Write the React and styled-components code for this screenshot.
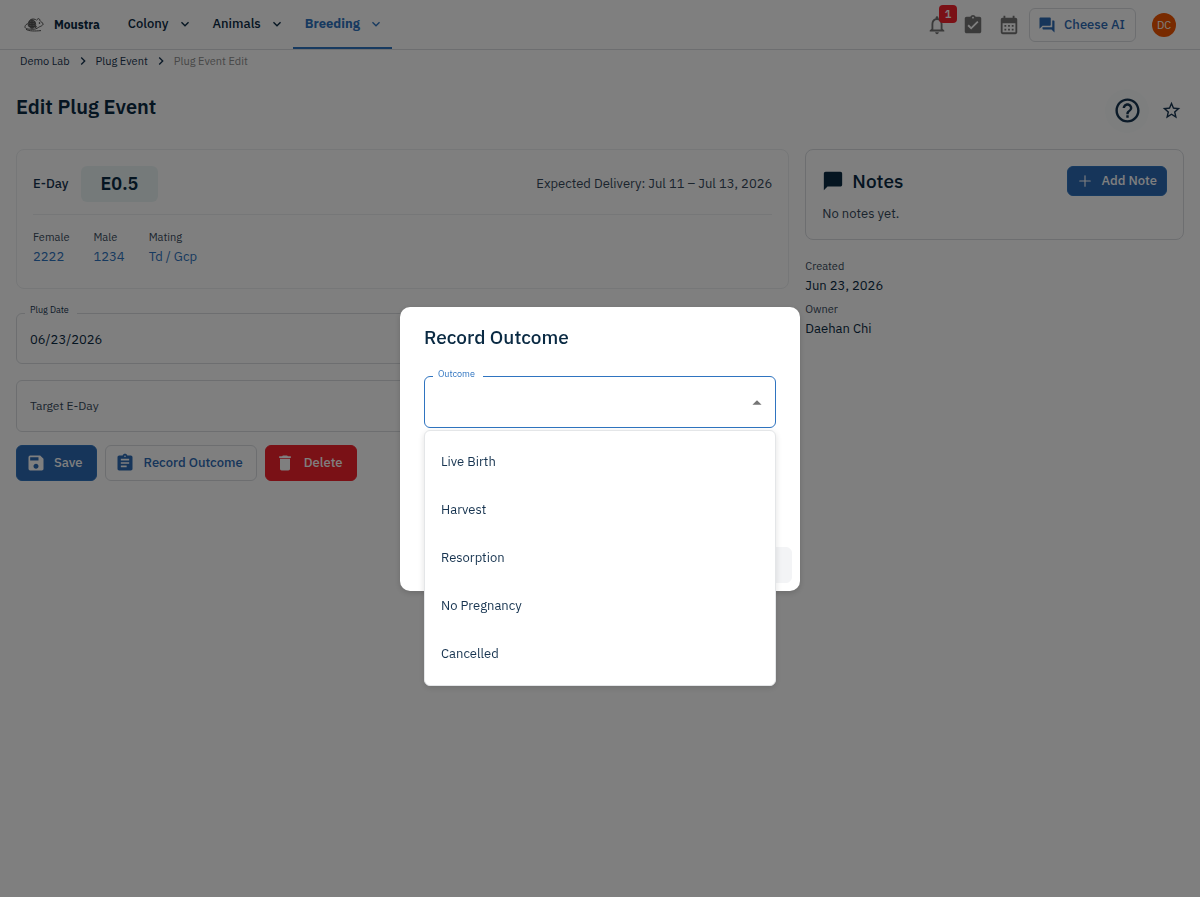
import React from 'react'
import styled, {createGlobalStyle, ThemeProvider} from 'styled-components'
import {Plus} from 'lucide-react'
import {
  MdArrowDropUp,
  MdAssignment,
  MdAssignmentTurnedIn,
  MdCalendarMonth,
  MdChatBubble,
  MdChevronRight,
  MdDelete,
  MdExpandMore,
  MdForum,
  MdHelpOutline,
  MdNotificationsNone,
  MdSave,
  MdStarBorder
} from 'react-icons/md'

const theme = {
  colors: {
    primary: '#2f74c0',
    primary_dark: '#2c6ab4',
    error: '#f5222d',
    navy: '#0a2a43',
    text: '#173450',
    muted: '#36495b',
    disabled: '#8f8f8f',
    icon: '#757575',
    border: '#dadde1',
    border_light: '#eceef0',
    white: '#ffffff'
  }
}

const GlobalStyle = createGlobalStyle`
  * {
    box-sizing: border-box;
  }

  body {
    margin: 0;
    background: #ffffff;
    font-family: 'IBM Plex Sans', 'Noto Sans', sans-serif;
    font-size: 13px;
    line-height: 20px;
    color: ${theme.colors.navy};
  }

  button, input, select {
    font: inherit;
  }

  h1, h2, p, ul, ol, dl, dd {
    margin: 0;
    padding: 0;
  }
`

const Page = styled.div`
  min-height: 100vh;
`

const Header = styled.header`
  display: flex;
  align-items: center;
  justify-content: space-between;
  height: 50px;
  padding: 0 24px;
  border-bottom: 1px solid ${props => props.theme.colors.border};
`

const HeaderGroup = styled.div`
  display: flex;
  align-items: stretch;
  height: 100%;
`

const Brand = styled.a`
  display: flex;
  align-items: center;
  gap: 10px;
  margin-right: 16px;
  color: ${props => props.theme.colors.navy};
  font-size: 12px;
  font-weight: 700;
  text-decoration: none;
`

const Nav = styled.nav`
  display: flex;
`

const NavButton = styled.button`
  display: flex;
  align-items: center;
  gap: 8px;
  padding: 0 8px 0 12px;
  border: 0;
  border-bottom: 2px solid ${props => props.$active ? props.theme.colors.primary : 'transparent'};
  background: none;
  color: ${props => props.$active ? props.theme.colors.primary : props.theme.colors.navy};
  font-weight: ${props => props.$active ? 700 : 500};
`

const Tools = styled.div`
  display: flex;
  align-items: center;
`

const ToolButton = styled.button`
  position: relative;
  display: flex;
  align-items: center;
  justify-content: center;
  width: 36px;
  height: 36px;
  padding: 0;
  border: 0;
  background: none;
  color: ${props => props.theme.colors.icon};
`

const Badge = styled.span`
  position: absolute;
  top: -2px;
  right: -2px;
  width: 18px;
  height: 18px;
  border-radius: 4px;
  background: ${props => props.theme.colors.error};
  color: ${props => props.theme.colors.white};
  font-size: 11px;
  font-weight: 600;
  line-height: 18px;
`

const Avatar = styled.button`
  width: 24px;
  height: 24px;
  margin-left: 16px;
  padding: 0;
  border: 0;
  border-radius: 50%;
  background: #f05400;
  color: ${props => props.theme.colors.white};
  font-size: 11px;
`

const variants = {
  contained: props => `
    background: ${props.theme.colors.primary_dark};
    border-color: ${props.theme.colors.primary};
    color: ${props.theme.colors.white};
  `,
  outlined: props => `
    gap: 9px;
    background: none;
    border-color: ${props.theme.colors.border};
    color: ${props.theme.colors.primary_dark};
  `,
  danger: props => `
    gap: 9px;
    background: ${props.theme.colors.error};
    border-color: ${props.theme.colors.error};
    color: ${props.theme.colors.white};
  `,
  disabled: () => `
    background: #f3f4f6;
    border-color: #f3f4f6;
    color: #8c959f;
  `
}

const Button = styled.button`
  display: flex;
  align-items: center;
  gap: ${props => props.$small ? 7 : 8}px;
  height: ${props => props.$small ? 30 : 36}px;
  padding: 0 ${props => props.$small ? 9 : 13}px 0 ${props => props.$small ? 8 : 9}px;
  border: 1px solid;
  border-radius: 6px;
  font-weight: 500;
  ${props => variants[props.$variant](props)}
`

const CheeseButton = styled(Button)`
  gap: 8px;
  height: 34px;
  margin-left: 2px;
  padding: 0 10px 0 8px;
`

const Breadcrumbs = styled.ol`
  display: flex;
  align-items: center;
  gap: 5px;
  height: 22px;
  padding: 0 20px;
  list-style: none;
  font-size: 11px;
  color: ${props => props.theme.colors.text};

  li {
    display: flex;
    align-items: center;
    gap: 5px;
  }

  a {
    color: inherit;
    text-decoration: none;
  }
`

const Current = styled.li`
  color: ${props => props.theme.colors.disabled};
`

const TitleBar = styled.div`
  display: flex;
  align-items: center;
  justify-content: space-between;
  height: 77px;
  padding: 0 16px;
`

const PageTitle = styled.h1`
  padding-bottom: 7px;
  font-size: 20px;
  font-weight: 600;
  line-height: 28px;
`

const TitleActions = styled.div`
  display: flex;
  align-items: center;
  gap: 9px;
`

const RoundButton = styled.button`
  display: flex;
  align-items: center;
  justify-content: center;
  width: ${props => props.$size}px;
  height: ${props => props.$size}px;
  padding: 0;
  border: 0;
  border-radius: 50%;
  background: ${props => props.$tinted ? '#fafdfd' : 'none'};
  color: ${props => props.theme.colors.text};
`

const Columns = styled.main`
  display: grid;
  grid-template-columns: repeat(12, minmax(0, 1fr));
  gap: 16px;
  align-items: start;
  padding: 0 16px;
`

const MainColumn = styled.section`
  grid-column: span 8;
`

const SideColumn = styled.aside`
  grid-column: span 4;
`

const Card = styled.div`
  padding: 16px;
  border: 1px solid ${props => props.theme.colors.border_light};
  border-radius: 8px;
`

const NotesCard = styled(Card)`
  padding-bottom: 15px;
  border-color: ${props => props.theme.colors.border};
`

const EventCard = styled(Card)`
  padding-bottom: 21px;
`

const EventTop = styled.div`
  display: flex;
  align-items: center;
  justify-content: space-between;
  padding-bottom: 12px;
  border-bottom: 1px solid ${props => props.theme.colors.border_light};
`

const EDay = styled.div`
  display: flex;
  align-items: center;
  gap: 12px;
  color: ${props => props.theme.colors.text};
  font-weight: 500;
`

const EDayChip = styled.strong`
  padding: 4px 20px;
  border-radius: 6px;
  background: #ebf5f5;
  color: ${props => props.theme.colors.navy};
  font-size: 18px;
  font-weight: 600;
  line-height: 28px;
`

const Expected = styled.span`
  color: ${props => props.theme.colors.muted};
`

const Facts = styled.dl`
  display: flex;
  flex-direction: ${props => props.$stacked ? 'column' : 'row'};
  gap: ${props => props.$stacked ? 4 : 24}px;
  padding-top: ${props => props.$stacked ? 16 : 12}px;

  dt {
    color: ${props => props.theme.colors.muted};
    font-size: 11px;
    line-height: 20px;
  }

  dd {
    line-height: ${props => props.$stacked ? 19 : 20}px;
  }
`

const TextLink = styled.a`
  color: ${props => props.theme.colors.primary};
  text-decoration: none;
`

const Field = styled.fieldset`
  display: flex;
  align-items: center;
  min-width: 0;
  margin: ${props => props.$gap}px 0 0;
  padding: 0 7px 0 8px;
  border: 1px solid ${props => props.$focused ? props.theme.colors.primary : props.theme.colors.border};
  border-radius: 6px;

  legend {
    padding: 0 8px 6px 5px;
    color: ${props => props.$focused ? props.theme.colors.primary : props.theme.colors.text};
    font-size: 9px;
    line-height: 14px;
  }

  input, select {
    width: 100%;
    height: ${props => props.$bare ? 50 : 40}px;
    padding: 0 0 ${props => props.$bare ? 2 : 8}px 5px;
    border: 0;
    outline: 0;
    appearance: none;
    background: none;
    color: ${props => props.theme.colors.navy};
  }

  input::placeholder {
    color: ${props => props.theme.colors.muted};
    font-size: 12px;
    opacity: 1;
  }

  svg {
    flex: none;
    margin-bottom: 8px;
  }
`

const Actions = styled.div`
  display: flex;
  gap: 8px;
  margin-top: 13px;
`

const NotesHeader = styled.div`
  display: flex;
  align-items: center;
  justify-content: space-between;
`

const NotesTitle = styled.h2`
  display: flex;
  align-items: center;
  gap: 8px;
  font-size: 19px;
  font-weight: 500;
`

const Empty = styled.p`
  padding-top: 8px;
  color: ${props => props.theme.colors.muted};
`

const Backdrop = styled.div`
  position: fixed;
  inset: 0;
  display: flex;
  align-items: center;
  justify-content: center;
  background: rgba(0, 0, 0, 0.5);
`

const Dialog = styled.div`
  display: flex;
  flex-direction: column;
  width: 400px;
  min-height: 284px;
  border-radius: 10px;
  background: ${props => props.theme.colors.white};
  box-shadow: 0 2px 6px rgba(0, 0, 0, 0.16);
`

const DialogTitle = styled.h2`
  padding: 16px 24px 0;
  font-size: 19px;
  font-weight: 500;
  line-height: 28px;
`

const DialogBody = styled.div`
  flex: 1;
  padding: 0 24px;
`

const DialogActions = styled.div`
  display: flex;
  justify-content: flex-end;
  gap: 8px;
  padding: 8px;
`

const Anchor = styled.div`
  position: relative;
  padding-bottom: 2px;
`

const Menu = styled.ul`
  position: absolute;
  top: 100%;
  left: 0;
  right: 0;
  padding: 7px 0;
  border: 1px solid #e4e6e8;
  border-radius: 6px;
  background: ${props => props.theme.colors.white};
  box-shadow: 0 2px 6px rgba(0, 0, 0, 0.12);
  list-style: none;
`

const Option = styled.li`
  display: flex;
  align-items: center;
  height: 48px;
  padding: 0 16px;
  color: ${props => props.theme.colors.text};
`

const MouseLogo = () => (
  <svg width="20" height="16" viewBox="0 0 20 16" fill="none" stroke="#555" strokeWidth="1">
    <path d="M4.5 9.5C3.5 5 6 1.8 9.5 2c1.4.1 2.4.6 3 1.3M13 3.2c.2-2 3-2.2 2.7 0M15.5 3.4c1.5.8 3 2.3 3.7 3.8-.6 1.2-2 2-3.5 2.5-2 1-3 2.3-5.7 2.5H6.5C3 12.2.6 11.3 1 9.5 1.3 8 2.6 7 3.900 6.700" />
    <path d="M2 12.3c3 2 9 1.9 15 1.3" />
    <ellipse cx="8" cy="7" rx="3" ry="4.2" fill="#777" />
    <path d="M5.5 5.5h5M5 7.5h6M6 9.5h4.500M8 3v8M10.5 4c1.5 2 1.5 4.5.5 7M12.5 9l-1 2" />
    <circle cx="15.5" cy="6" r=".5" fill="#444" />
  </svg>
)

const navItems = ['Colony', 'Animals', 'Breeding']
const outcomes = ['Live Birth', 'Harvest', 'Resorption', 'No Pregnancy', 'Cancelled']

const AppHeader = () => {
  return (
    <Header>
      <HeaderGroup>
        <Brand href="#home"><MouseLogo />Moustra</Brand>
        <Nav>
          {navItems.map(item => (
            <NavButton key={item} type="button" $active={item === 'Breeding'}>
              {item} <MdExpandMore size={16} />
            </NavButton>
          ))}
        </Nav>
      </HeaderGroup>
      <Tools>
        <ToolButton type="button" aria-label="Notifications">
          <MdNotificationsNone size={22} />
          <Badge>1</Badge>
        </ToolButton>
        <ToolButton type="button" aria-label="Tasks"><MdAssignmentTurnedIn size={22} /></ToolButton>
        <ToolButton type="button" aria-label="Calendar"><MdCalendarMonth size={22} /></ToolButton>
        <CheeseButton type="button" $variant="outlined"><MdForum size={18} />Cheese AI</CheeseButton>
        <Avatar type="button">DC</Avatar>
      </Tools>
    </Header>
  )
}

const RecordOutcomeDialog = () => {
  return (
    <Backdrop>
      <Dialog role="dialog" aria-modal="true" aria-labelledby="outcome-title">
        <DialogTitle id="outcome-title">Record Outcome</DialogTitle>
        <DialogBody>
          <Anchor>
            <Field $gap={16} $focused>
              <legend><label htmlFor="outcome">Outcome</label></legend>
              <select id="outcome" defaultValue="">
                <option value=""></option>
                {outcomes.map(outcome => <option key={outcome}>{outcome}</option>)}
              </select>
              <MdArrowDropUp size={22} color={theme.colors.icon} />
            </Field>
            <Menu role="listbox" aria-label="Outcome">
              {outcomes.map(outcome => <Option key={outcome} role="option">{outcome}</Option>)}
            </Menu>
          </Anchor>
        </DialogBody>
        <DialogActions>
          <Button type="button" $variant="disabled" disabled aria-label="Save outcome" />
        </DialogActions>
      </Dialog>
    </Backdrop>
  )
}

const App = () => {
  return (
    <ThemeProvider theme={theme}>
      <GlobalStyle />
      <Page>
        <AppHeader />
        <Breadcrumbs>
          <li><a href="#lab">Demo Lab</a><MdChevronRight size={16} /></li>
          <li><a href="#plug">Plug Event</a><MdChevronRight size={16} /></li>
          <Current>Plug Event Edit</Current>
        </Breadcrumbs>
        <TitleBar>
          <PageTitle>Edit Plug Event</PageTitle>
          <TitleActions>
            <RoundButton type="button" $size={44} $tinted aria-label="Help"><MdHelpOutline size={29} /></RoundButton>
            <RoundButton type="button" $size={26} aria-label="Favorite"><MdStarBorder size={21} /></RoundButton>
          </TitleActions>
        </TitleBar>
        <Columns>
          <MainColumn>
            <EventCard>
              <EventTop>
                <EDay>E-Day <EDayChip>E0.5</EDayChip></EDay>
                <Expected>Expected Delivery: Jul 11 – Jul 13, 2026</Expected>
              </EventTop>
              <Facts>
                <div><dt>Female</dt><dd><TextLink href="#2222">2222</TextLink></dd></div>
                <div><dt>Male</dt><dd><TextLink href="#1234">1234</TextLink></dd></div>
                <div><dt>Mating</dt><dd><TextLink href="#mating">Td / Gcp</TextLink></dd></div>
              </Facts>
            </EventCard>
            <Field $gap={14}>
              <legend><label htmlFor="plug-date">Plug Date</label></legend>
              <input id="plug-date" type="text" defaultValue="06/23/2026" />
            </Field>
            <Field $gap={16} $bare>
              <input type="text" aria-label="Target E-Day" placeholder="Target E-Day" />
            </Field>
            <Actions>
              <Button type="button" $variant="contained"><MdSave size={20} />Save</Button>
              <Button type="button" $variant="outlined"><MdAssignment size={20} />Record Outcome</Button>
              <Button type="button" $variant="danger"><MdDelete size={20} />Delete</Button>
            </Actions>
          </MainColumn>
          <SideColumn>
            <NotesCard>
              <NotesHeader>
                <NotesTitle><MdChatBubble size={22} />Notes</NotesTitle>
                <Button type="button" $variant="contained" $small><Plus size={18} strokeWidth={1.5} />Add Note</Button>
              </NotesHeader>
              <Empty>No notes yet.</Empty>
            </NotesCard>
            <Facts $stacked>
              <div><dt>Created</dt><dd>Jun 23, 2026</dd></div>
              <div><dt>Owner</dt><dd>Daehan Chi</dd></div>
            </Facts>
          </SideColumn>
        </Columns>
      </Page>
      <RecordOutcomeDialog />
    </ThemeProvider>
  )
}

export default App
